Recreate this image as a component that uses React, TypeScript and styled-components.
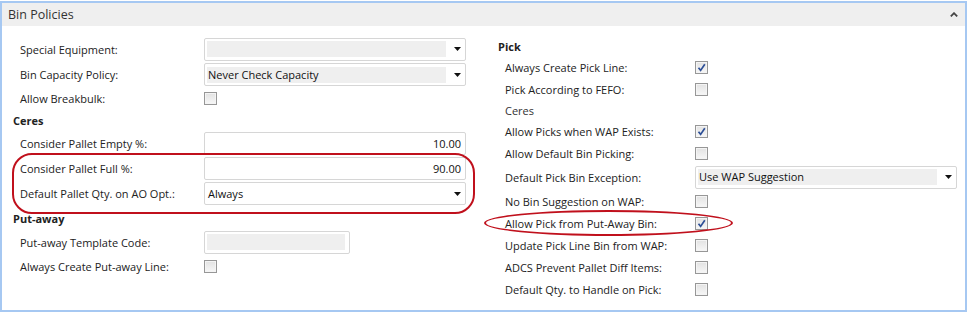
import React from "react";
import styled, { createGlobalStyle } from "styled-components";

const GlobalStyle = createGlobalStyle`
  html, body {
    margin: 0;
    padding: 0;
    background: #fff;
  }
  body {
    font-family: "Open Sans", "Liberation Sans", sans-serif;
    font-size: 11px;
    color: #1e1e1e;
  }
`;

type RowSpec =
  | { kind: "heading"; text: string; h: number; bold?: boolean }
  | { kind: "field"; label: string; h: number; value?: string; w?: number; shaded?: boolean; select?: boolean; right?: boolean }
  | { kind: "check"; label: string; h: number; checked?: boolean };

const Check: React.FC<{ checked?: boolean }> = ({ checked }) => (
  <CheckBox>
    {checked && (
      <svg width="11" height="11" viewBox="0 0 11 11">
        <path d="M2.5 5.8 L4.6 8.4 L8.8 2.2" fill="none" stroke="#2d4f97" strokeWidth="1.7" />
      </svg>
    )}
  </CheckBox>
);

const DropArrow = () => (
  <Arrow width="7" height="4" viewBox="0 0 7 4">
    <path d="M0 0 H7 L3.5 4 Z" fill="#111" />
  </Arrow>
);

const renderRow = (r: RowSpec, labelWidth: number, key: number) => {
  if (r.kind === "heading") {
    return (
      <Heading key={key} $h={r.h} $bold={r.bold !== false}>
        {r.text}
      </Heading>
    );
  }
  return (
    <Row key={key} $h={r.h} $label={labelWidth}>
      <Label>{r.label}</Label>
      {r.kind === "check" ? (
        <Check checked={r.checked} />
      ) : (
        <Field $w={r.w ?? 262}>
          <FieldFill $shaded={r.shaded} $right={r.right}>
            {r.value}
          </FieldFill>
          {r.select && <DropArrow />}
        </Field>
      )}
    </Row>
  );
};

const leftTop: RowSpec[] = [
  { kind: "field", label: "Special Equipment:", h: 26, shaded: true, select: true },
  { kind: "field", label: "Bin Capacity Policy:", h: 25, value: "Never Check Capacity", shaded: true, select: true },
  { kind: "check", label: "Allow Breakbulk:", h: 22 },
  { kind: "heading", text: "Ceres", h: 22 },
  { kind: "field", label: "Consider Pallet Empty %:", h: 25, value: "10.00", right: true },
];

const leftMarked: RowSpec[] = [
  { kind: "field", label: "Consider Pallet Full %:", h: 25, value: "90.00", right: true },
  { kind: "field", label: "Default Pallet Qty. on AO Opt.:", h: 25, value: "Always", select: true },
];

const leftBottom: RowSpec[] = [
  { kind: "heading", text: "Put-away", h: 24 },
  { kind: "field", label: "Put-away Template Code:", h: 24, w: 146, shaded: true },
  { kind: "check", label: "Always Create Put-away Line:", h: 24 },
];

const rightTop: RowSpec[] = [
  { kind: "heading", text: "Pick", h: 20 },
  { kind: "check", label: "Always Create Pick Line:", h: 22, checked: true },
  { kind: "check", label: "Pick According to FEFO:", h: 22 },
  { kind: "heading", text: "Ceres", h: 20, bold: false },
  { kind: "check", label: "Allow Picks when WAP Exists:", h: 22, checked: true },
  { kind: "check", label: "Allow Default Bin Picking:", h: 22 },
  { kind: "field", label: "Default Pick Bin Exception:", h: 26, value: "Use WAP Suggestion", shaded: true, select: true },
  { kind: "check", label: "No Bin Suggestion on WAP:", h: 22 },
];

const rightMarked: RowSpec[] = [
  { kind: "check", label: "Allow Pick from Put-Away Bin:", h: 22, checked: true },
];

const rightBottom: RowSpec[] = [
  { kind: "check", label: "Update Pick Line Bin from WAP:", h: 22 },
  { kind: "check", label: "ADCS Prevent Pallet Diff Items:", h: 22 },
  { kind: "check", label: "Default Qty. to Handle on Pick:", h: 22 },
];

const App: React.FC = () => {
  return (
    <>
      <GlobalStyle />
      <Panel>
        <Header>
          <Title>Bin Policies</Title>
          <svg width="8" height="5" viewBox="0 0 8 5">
            <path d="M0.8 4.4 L4 1.2 L7.2 4.4" fill="none" stroke="#444" strokeWidth="1.8" />
          </svg>
        </Header>
        <Body>
          <LeftColumn>
            {leftTop.map((r, i) => renderRow(r, 191, i))}
            <Highlight $top={-3} $right={23} $bottom={-8} $left={-1} $radius="20px">
              {leftMarked.map((r, i) => renderRow(r, 191, i))}
            </Highlight>
            {leftBottom.map((r, i) => renderRow(r, 191, i))}
          </LeftColumn>
          <RightColumn>
            {rightTop.map((r, i) => renderRow(r, 197, i))}
            <Highlight $top={-2} $right={232} $bottom={-2} $left={-14} $radius="50%">
              {rightMarked.map((r, i) => renderRow(r, 197, i))}
            </Highlight>
            {rightBottom.map((r, i) => renderRow(r, 197, i))}
          </RightColumn>
        </Body>
      </Panel>
    </>
  );
};

export default App;

const Panel = styled.div`
  box-sizing: border-box;
  width: 967px;
  height: 311px;
  margin-top: 1px;
  border: 2px solid #a6c8f2;
  background: #fff;
`;

const Header = styled.div`
  display: flex;
  align-items: center;
  justify-content: space-between;
  height: 23px;
  padding: 0 7px 0 6px;
  background: #efefef;
`;

const Title = styled.div`
  font-size: 12.5px;
  color: #333;
`;

const Body = styled.div`
  display: flex;
  padding: 10px 0 0 11px;
`;

const LeftColumn = styled.div`
  display: flex;
  flex-direction: column;
  width: 485px;
`;

const RightColumn = styled.div`
  display: flex;
  flex-direction: column;
  flex: 1;
`;

const Heading = styled.div<{ $h: number; $bold: boolean }>`
  display: flex;
  align-items: center;
  height: ${({ $h }) => $h}px;
  padding-left: ${({ $bold }) => ($bold ? 0 : 7)}px;
  font-weight: ${({ $bold }) => ($bold ? 700 : 400)};
  color: ${({ $bold }) => ($bold ? "#222" : "#333")};
`;

const Row = styled.div<{ $h: number; $label: number }>`
  display: grid;
  grid-template-columns: ${({ $label }) => $label}px auto;
  align-items: center;
  height: ${({ $h }) => $h}px;
`;

const Label = styled.div`
  padding-left: 7px;
  white-space: nowrap;
  color: #222;
`;

const Field = styled.div<{ $w: number }>`
  display: flex;
  align-items: center;
  box-sizing: border-box;
  width: ${({ $w }) => $w}px;
  height: 23px;
  padding: 2px 4px 2px 2px;
  border: 1px solid #d6d6d6;
  border-radius: 2px;
  background: #fff;
`;

const FieldFill = styled.div<{ $shaded?: boolean; $right?: boolean }>`
  flex: 1;
  height: 16px;
  line-height: 16px;
  padding-left: 1px;
  background: ${({ $shaded }) => ($shaded ? "#efefef" : "transparent")};
  text-align: ${({ $right }) => ($right ? "right" : "left")};
  color: #111;
  white-space: nowrap;
`;

const Arrow = styled.svg`
  flex: none;
  margin-left: 8px;
`;

const CheckBox = styled.div`
  display: flex;
  align-items: center;
  justify-content: center;
  box-sizing: border-box;
  width: 13px;
  height: 13px;
  border: 1px solid #979797;
  background: linear-gradient(180deg, #e2e2e2, #f7f7f7);
  box-shadow: inset 0 0 0 1px #f4f4f4;
`;

const Highlight = styled.div<{ $top: number; $right: number; $bottom: number; $left: number; $radius: string }>`
  position: relative;

  &::after {
    content: "";
    position: absolute;
    top: ${({ $top }) => $top}px;
    right: ${({ $right }) => $right}px;
    bottom: ${({ $bottom }) => $bottom}px;
    left: ${({ $left }) => $left}px;
    border: 2px solid #c0101c;
    border-radius: ${({ $radius }) => $radius};
    pointer-events: none;
  }
`;
